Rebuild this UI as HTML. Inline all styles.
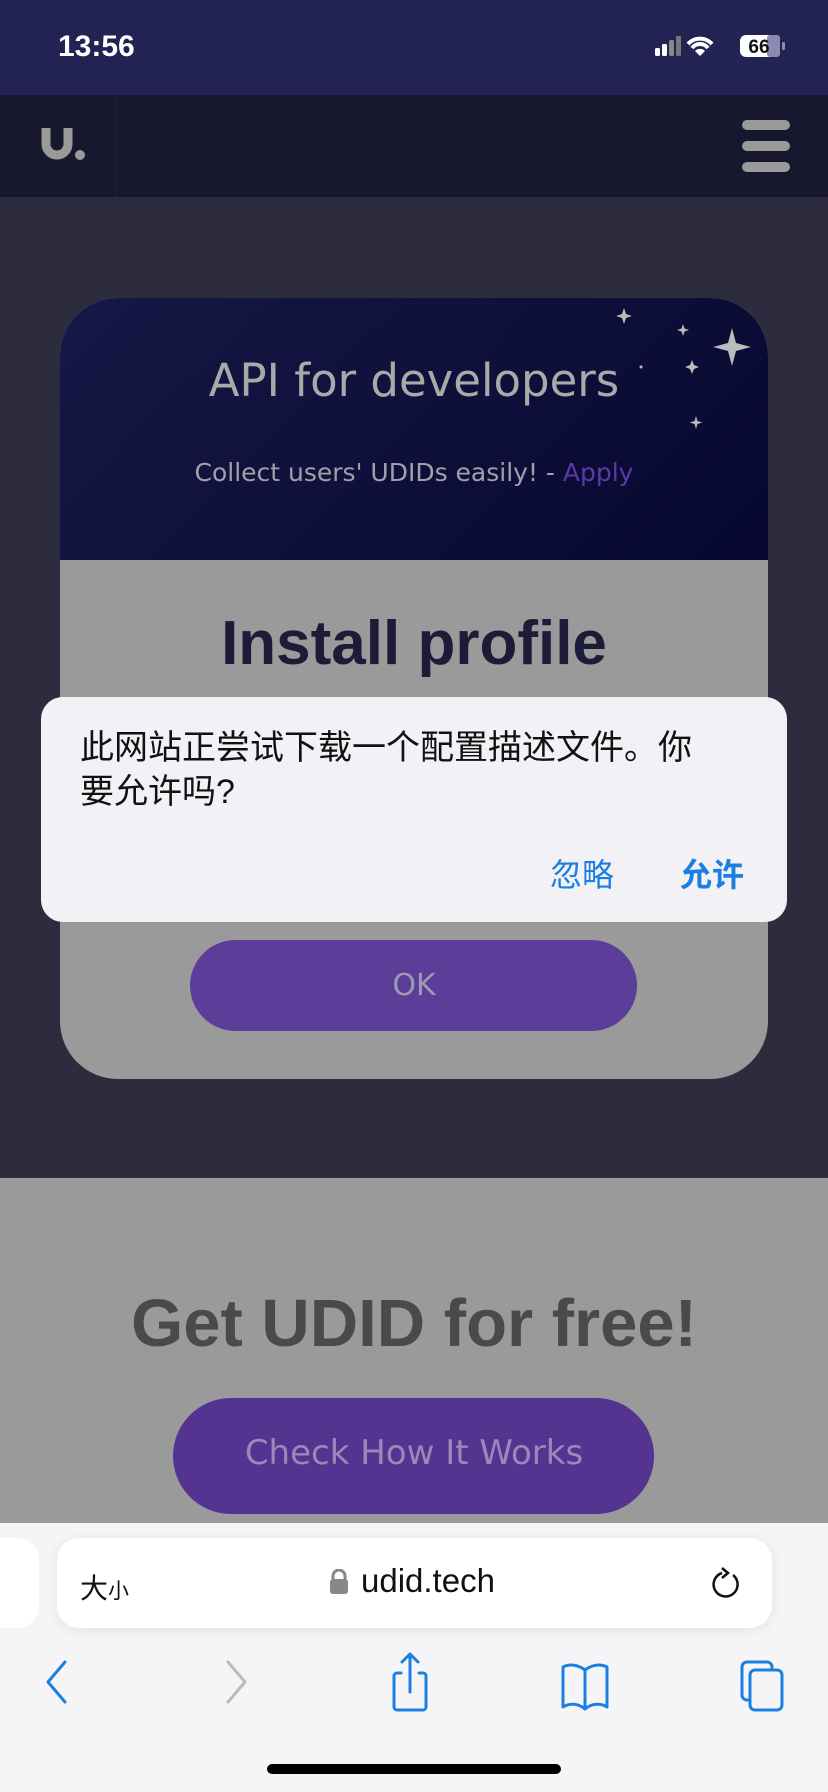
<!DOCTYPE html><html><head><meta charset="utf-8"><style>
*{margin:0;padding:0;box-sizing:border-box}
body{width:828px;height:1792px;overflow:hidden;position:relative;background:#2c2c3e;font-family:"Liberation Sans","Noto Sans CJK SC",sans-serif}
.a{position:absolute}
.c{text-align:center;left:0;width:828px}
</style></head><body>
<div class="a" style="left:0;top:0;width:828px;height:95px;background:#222352"></div>
<div class="a" style="left:58px;top:30px;color:#fff;font-size:30px;font-weight:bold">13:56</div>
<svg class="a" style="left:654px;top:34px" width="140" height="30">
<rect x="1" y="14" width="5" height="8" rx="1.5" fill="#fff"/><rect x="8" y="10" width="5" height="12" rx="1.5" fill="#fff"/><rect x="15" y="6" width="5" height="16" rx="1.5" fill="#888"/><rect x="22" y="2" width="5" height="20" rx="1.5" fill="#777"/>
<path d="M34 10 A16 16 0 0 1 58 10 M38 14 A10 10 0 0 1 54 14" stroke="#fff" stroke-width="4" fill="none"/><path d="M46 22 L41 17 A7 7 0 0 1 51 17 Z" fill="#fff"/>
<rect x="86" y="1" width="40" height="22" rx="6" fill="#fff"/><rect x="113" y="1" width="13" height="22" rx="3" fill="#8a8ab0"/><rect x="128" y="8" width="3" height="8" rx="1" fill="#8a8ab0"/>
<text x="105" y="19" font-size="19" font-weight="bold" text-anchor="middle" fill="#111" font-family="Liberation Sans">66</text></svg>
<div class="a" style="left:0;top:95px;width:828px;height:102px;background:#17172e"></div>
<div class="a" style="left:115px;top:95px;width:1px;height:102px;background:#222238"></div>
<svg class="a" style="left:40px;top:126px" width="50" height="36"><path d="M6 2 V18 a11 11 0 0 0 22 0 V2" stroke="#9a9a9a" stroke-width="9" fill="none"/><circle cx="40" cy="29" r="5" fill="#9a9a9a"/></svg>
<div class="a" style="left:742px;top:120px;width:48px;height:10px;border-radius:5px;background:#9a9a9a"></div>
<div class="a" style="left:742px;top:141px;width:48px;height:10px;border-radius:5px;background:#9a9a9a"></div>
<div class="a" style="left:742px;top:162px;width:48px;height:10px;border-radius:5px;background:#9a9a9a"></div>

<div class="a" style="left:60px;top:298px;width:708px;height:781px;border-radius:58px;overflow:hidden;background:#9a9a9a">
<div style="height:262px;background:linear-gradient(135deg,#161845,#070830)"></div>
<svg class="a" style="left:0;top:0" width="708" height="140">
<g fill="#bbb"><path d="M564 10 l2 6 6 2 -6 2 -2 6 -2 -6 -6 -2 6 -2z"/><path d="M623 26 l1.5 4.5 4.5 1.5 -4.5 1.5 -1.5 4.5 -1.5 -4.5 -4.5 -1.5 4.5 -1.5z"/><path d="M672 30 l4 15 15 4 -15 4 -4 15 -4 -15 -15 -4 15 -4z"/><path d="M632 62 l2 5 5 2 -5 2 -2 5 -2 -5 -5 -2 5 -2z"/><path d="M636 118 l1.5 5 5 1.5 -5 1.5 -1.5 5 -1.5 -5 -5 -1.5 5 -1.5z"/><circle cx="581" cy="69" r="1.5"/></g></svg>
</div>
<div class="a c" style="top:354px;color:#a9a9a9;font-size:45px;font-family:'DejaVu Sans',sans-serif">API for developers</div>
<div class="a c" style="top:458px;color:#a0a0a8;font-size:25px;font-family:'DejaVu Sans',sans-serif">Collect users' UDIDs easily! - <span style="color:#5a3aa8">Apply</span></div>
<div class="a c" style="top:608px;color:#1c1c38;font-size:62px;font-weight:bold">Install profile</div>
<div class="a" style="left:190px;top:940px;width:447px;height:91px;border-radius:46px;background:#5c3d9a"></div>
<div class="a c" style="top:968px;color:#9e9ab0;font-size:30px;font-family:'DejaVu Sans',sans-serif">OK</div>

<div class="a" style="left:41px;top:697px;width:746px;height:225px;border-radius:22px;background:#f1f1f6"></div>
<div class="a" style="left:80px;top:726px;width:680px;color:#111;font-size:34px;line-height:44px;white-space:nowrap">此网站正尝试下载一个配置描述文件。你<br>要允许吗?</div>
<div class="a" style="left:550px;top:850px;color:#1a7fe0;font-size:32px">忽略</div>
<div class="a" style="left:680px;top:850px;color:#1a7fe0;font-size:32px;font-weight:bold">允许</div>

<div class="a" style="left:0;top:1178px;width:828px;height:345px;background:#9a9a9a"></div>
<div class="a c" style="top:1285px;color:#4a4a4a;font-size:67px;font-weight:bold">Get UDID for free!</div>
<div class="a" style="left:173px;top:1398px;width:481px;height:116px;border-radius:58px;background:#553390"></div>
<div class="a c" style="top:1433px;color:#9a88b8;font-size:34px;font-family:'DejaVu Sans',sans-serif">Check How It Works</div>

<div class="a" style="left:0;top:1523px;width:828px;height:269px;background:#f5f5f7"></div>
<div class="a" style="left:-20px;top:1538px;width:59px;height:90px;border-radius:22px;background:#fff"></div>
<div class="a" style="left:57px;top:1538px;width:715px;height:90px;border-radius:22px;background:#fff;box-shadow:0 2px 12px rgba(0,0,0,0.08)"></div>
<div class="a" style="left:80px;top:1567px;font-size:28px;color:#111">大<span style="font-size:21px">小</span></div>
<svg class="a" style="left:329px;top:1569px" width="20" height="26"><path d="M4 11 V7 a6 6 0 0 1 12 0 V11" stroke="#888" stroke-width="3" fill="none"/><rect x="1" y="10" width="18" height="15" rx="3" fill="#888"/></svg>
<div class="a" style="left:361px;top:1562px;font-size:33px;color:#111">udid.tech</div>
<svg class="a" style="left:710px;top:1565px" width="34" height="38"><path d="M23 10 A12 12 0 1 1 12 8" stroke="#111" stroke-width="2.5" fill="none"/><path d="M12 3 L18 8 L12 13" stroke="#111" stroke-width="2.5" fill="none"/></svg>
<svg class="a" style="left:0;top:1640px" width="828" height="80" fill="none" stroke-width="3" stroke-linecap="round" stroke-linejoin="round">
<path d="M65 22 L48 42 L65 62" stroke="#1a7fe0"/>
<path d="M228 22 L245 42 L228 62" stroke="#bbb"/>
<g stroke="#1a7fe0"><path d="M401 33 H397 a3 3 0 0 0 -3 3 V67 a3 3 0 0 0 3 3 H423 a3 3 0 0 0 3 -3 V36 a3 3 0 0 0 -3 -3 H419"/><path d="M410 52 V14 M402 22 L410 14 L418 22"/>
<path d="M585 30 C577 24 569 24 563 27 V67 C569 63 578 63 585 69 C592 63 601 63 607 67 V27 C601 24 593 24 585 30 V69"/>
<rect x="742" y="22" width="30" height="38" rx="5"/><rect x="750" y="30" width="32" height="40" rx="5" fill="#f5f5f7"/></g></svg>
<div class="a" style="left:267px;top:1764px;width:294px;height:10px;border-radius:5px;background:#000"></div>
</body></html>
